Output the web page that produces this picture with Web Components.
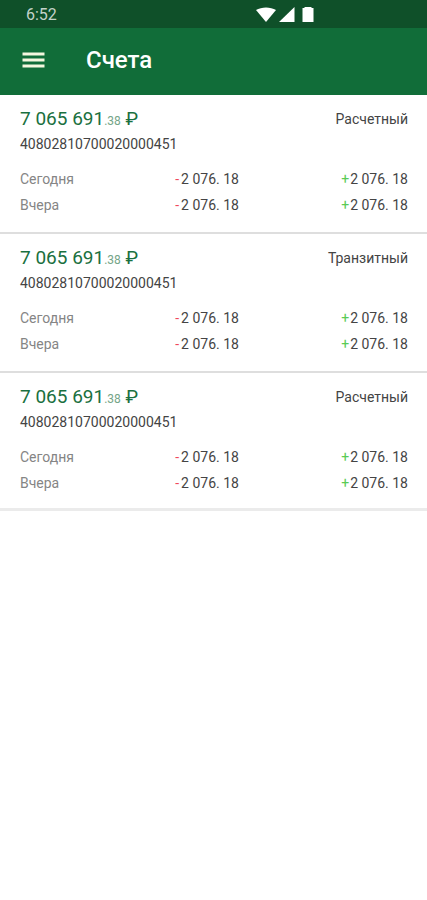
<!DOCTYPE html>
<html lang="ru">
<head>
<meta charset="utf-8">
<meta name="viewport" content="width=device-width, initial-scale=1">
<title>Счета</title>
<style>
  body { margin: 0; background: #fff; font-family: Roboto, "Noto Sans", sans-serif; color: #444; }
</style>
</head>
<body>
<accounts-screen></accounts-screen>

<template id="status-bar">
  <style>
    :host { display: flex; align-items: center; height: 28px; padding: 2px 111px 0 26px; box-sizing: border-box; background: #0f5029; color: #c3d3c9; font-size: 16px; line-height: 26px; }
    .icons { display: flex; gap: 3px; margin-left: auto; }
    svg { display: block; height: 16px; fill: #fff; }
  </style>
  <span><slot></slot></span>
  <span class="icons">
    <svg width="20" height="16" viewBox="0 0 20 16" aria-hidden="true"><path d="M0 3C5.500-.4 14.500-.4 20 3L10 15Z"/></svg>
    <svg width="16" height="16" viewBox="0 0 16 16" aria-hidden="true"><path d="M15.500 0V15H0Z"/></svg>
    <svg width="18" height="16" viewBox="0 0 18 16" aria-hidden="true"><path d="M4.500 1H6.500V0H13.500V1H15.500V15H4.500Z"/></svg>
  </span>
</template>

<template id="app-bar">
  <style>
    :host { display: flex; align-items: center; gap: 40px; height: 67px; padding: 0 20px 4px; box-sizing: border-box; background: #116d39; color: #fff; }
    button { display: block; padding: 0; border: 0; background: none; color: #f4f8df; }
    svg { display: block; }
    h1 { margin: 0; font-size: 24px; line-height: 32px; font-weight: 500; }
  </style>
  <button type="button" aria-label="Меню">
    <svg width="26" height="24" viewBox="0 0 26 24" fill="currentColor" aria-hidden="true"><path d="M2.500 4.500H24.500V7.500H2.500ZM2.500 10.500H24.500V13.500H2.500ZM2.500 16.500H24.500V19.500H2.500Z"/></svg>
  </button>
  <h1><slot></slot></h1>
</template>

<template id="account-card">
  <style>
    :host { display: block; padding: 12px 19px 14px 20px; border-bottom: 2px solid #dedede; font-size: 14px; line-height: 26px; }
    :host(:last-of-type) { padding-bottom: 12px; border-bottom: 3px solid #ebebeb; }
    .top { display: flex; justify-content: space-between; align-items: center; height: 24px; line-height: 24px; }
    .sum { color: #1a7040; font-size: 19px; }
    .sum small { color: #75a588; font-size: 12px; line-height: 12px; }
    .number { margin-bottom: 9px; }
    table { width: 100%; border-collapse: collapse; table-layout: fixed; }
    th, td { padding: 0; font-weight: 400; text-align: left; white-space: nowrap; }
    th { width: 40%; color: #858585; }
    td:last-child { text-align: right; }
    .out { margin-right: 2px; color: #f0485c; }
    .in { margin-right: 1px; color: #5acb55; }
  </style>
  <div class="top">
    <span class="sum"><slot name="whole"></slot><small><slot name="cents"></slot></small> ₽</span>
    <span><slot name="kind"></slot></span>
  </div>
  <div class="number"><slot name="number"></slot></div>
  <table>
    <tbody>
      <tr><th scope="row">Сегодня</th><td><span class="out">-</span>2 076. 18</td><td><span class="in">+</span>2 076. 18</td></tr>
      <tr><th scope="row">Вчера</th><td><span class="out">-</span>2 076. 18</td><td><span class="in">+</span>2 076. 18</td></tr>
    </tbody>
  </table>
</template>

<template id="accounts-screen">
  <style>
    :host { display: block; }
    main { display: block; }
  </style>
  <status-bar>6:52</status-bar>
  <app-bar>Счета</app-bar>
  <main>
    <account-card><span slot="whole">7 065 691</span><span slot="cents">.38</span><span slot="kind">Расчетный</span><span slot="number">40802810700020000451</span></account-card>
    <account-card><span slot="whole">7 065 691</span><span slot="cents">.38</span><span slot="kind">Транзитный</span><span slot="number">40802810700020000451</span></account-card>
    <account-card><span slot="whole">7 065 691</span><span slot="cents">.38</span><span slot="kind">Расчетный</span><span slot="number">40802810700020000451</span></account-card>
  </main>
</template>

<script>
  class TemplateElement extends HTMLElement {
    constructor() {
      super();
      const template = document.getElementById(this.localName);
      this.attachShadow({ mode: "open" }).append(template.content.cloneNode(true));
    }
  }
  customElements.define("status-bar", class extends TemplateElement {});
  customElements.define("app-bar", class extends TemplateElement {});
  customElements.define("account-card", class extends TemplateElement {});
  customElements.define("accounts-screen", class extends TemplateElement {});
</script>
</body>
</html>
